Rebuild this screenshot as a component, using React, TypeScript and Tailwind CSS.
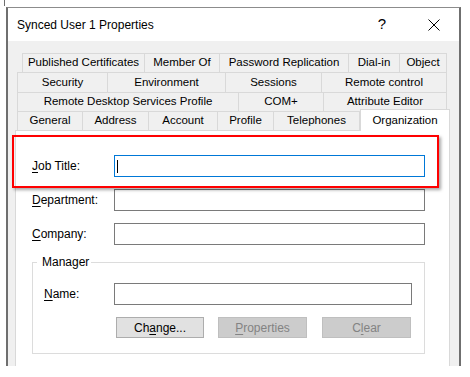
const font = { fontFamily: '"Liberation Sans", Arial, sans-serif' };

type TabDef = { label: string; w: number };

const row1: TabDef[] = [
  { label: "Published Certificates", w: 123 },
  { label: "Member Of", w: 75 },
  { label: "Password Replication", w: 129 },
  { label: "Dial-in", w: 51 },
  { label: "Object", w: 47 },
];
const row2: TabDef[] = [
  { label: "Security", w: 91 },
  { label: "Environment", w: 118 },
  { label: "Sessions", w: 96 },
  { label: "Remote control", w: 125 },
];
const row3: TabDef[] = [
  { label: "Remote Desktop Services Profile", w: 222 },
  { label: "COM+", w: 85 },
  { label: "Attribute Editor", w: 123 },
];
const row4: TabDef[] = [
  { label: "General", w: 66 },
  { label: "Address", w: 66 },
  { label: "Account", w: 69 },
  { label: "Profile", w: 56 },
  { label: "Telephones", w: 86 },
];

function TabRow({ tabs, className, bottom }: { tabs: TabDef[]; className: string; bottom?: boolean }) {
  return (
    <div className={`flex ${className}`}>
      {tabs.map((t, i) => (
        <div
          key={t.label}
          style={{ width: t.w }}
          className={`flex items-center justify-center border-t border-r border-[#d9d9d9] bg-[#f0f0f0] text-[11.5px] text-black whitespace-nowrap ${
            i === 0 ? "border-l" : ""
          } ${bottom ? "border-b" : ""}`}
        >
          {t.label}
        </div>
      ))}
    </div>
  );
}

function Field({ u, rest, focused }: { u: string; rest: string; focused?: boolean }) {
  return (
    <div className="flex items-center h-[22px]">
      <div className="w-[82px] text-[12px] text-black">
        <span className="underline underline-offset-2">{u}</span>
        {rest}
      </div>
      <div
        className={`w-[311px] h-[22px] bg-white border flex items-center pl-[2px] ${
          focused ? "border-[#0078d7]" : "border-[#7a7a7a]"
        }`}
      >
        {focused && <span className="w-px h-[13px] bg-black" />}
      </div>
    </div>
  );
}

function Btn({ children, disabled, w }: { children: React.ReactNode; disabled?: boolean; w: string }) {
  return (
    <div
      className={`${w} h-[21px] flex items-center justify-center border text-[12px] ${
        disabled ? "bg-[#cccccc] border-[#bfbfbf] text-[#838383]" : "bg-[#e1e1e1] border-[#adadad] text-black"
      }`}
    >
      {children}
    </div>
  );
}

export default function App() {
  return (
    <div style={font} className="relative w-[470px] h-[377px] bg-white overflow-hidden">
      <div className="h-[7px]">
        <div className="ml-[4px] w-px h-[6px] bg-[#6f6f6f]" />
      </div>

      <div className="ml-[6px] w-[455px] h-[359px] border-x-2 border-t border-x-[#6f6f6f] border-t-[#8c8c8c] flex flex-col">
        {/* title bar */}
        <div className="h-[33px] bg-white flex items-center pl-[9px] pr-[19px]">
          <span className="text-[12px] text-black">Synced User 1 Properties</span>
          <span className="ml-auto text-[15px] text-black">?</span>
          <svg className="ml-[42px]" width="12" height="12" viewBox="0 0 12 12">
            <path d="M0.5 0.5 L11.5 11.5 M11.5 0.5 L0.5 11.5" stroke="#000" strokeWidth="1" fill="none" />
          </svg>
        </div>

        {/* body */}
        <div className="flex-1 bg-[#f0f0f0] pt-[12px] pl-[7px]">
          <div className="w-[435px] flex flex-col">
            <TabRow tabs={row1} className="h-[19px] ml-[7px]" />
            <TabRow tabs={row2} className="h-[20px] ml-[2px]" />
            <TabRow tabs={row3} className="h-[19px] ml-[2px]" />
            <div className="flex h-[20px]">
              <div className="w-[2px] border-b border-[#d9d9d9]" />
              <TabRow tabs={row4} className="h-[20px]" bottom />
              <div className="relative z-10 -mt-[2px] w-[90px] h-[22px] bg-white border-t border-x border-[#d9d9d9] flex items-center justify-center text-[11.5px] text-black">
                Organization
              </div>
            </div>

            {/* tab page */}
            <div className="h-[235px] bg-white border-x border-[#d9d9d9]">
              <div className="pt-[24px] pl-[16px] flex flex-col gap-[12px]">
                <Field u="J" rest="ob Title:" focused />
                <Field u="D" rest="epartment:" />
                <Field u="C" rest="ompany:" />
              </div>

              <fieldset className="mt-[10px] ml-[16px] w-[393px] border border-[#dcdcdc] pb-[15px]">
                <legend className="ml-[4px] pl-[5px] pr-[2px] text-[12px] leading-[14px] text-black">Manager</legend>
                <div className="pl-[11px]">
                  <div className="mt-[14px] flex items-center h-[22px]">
                    <div className="w-[70px] text-[12px] text-black">
                      <span className="underline underline-offset-2">N</span>ame:
                    </div>
                    <div className="w-[298px] h-[22px] bg-white border border-[#7a7a7a]" />
                  </div>
                  <div className="mt-[12px] ml-[72px] flex gap-[14px]">
                    <Btn w="w-[88px]">
                      Ch<span className="underline underline-offset-2">a</span>nge...
                    </Btn>
                    <Btn w="w-[89px]" disabled>
                      <span className="underline underline-offset-2">P</span>roperties
                    </Btn>
                    <div className="ml-px">
                      <Btn w="w-[89px]" disabled>
                        C<span className="underline underline-offset-2">l</span>ear
                      </Btn>
                    </div>
                  </div>
                </div>
              </fieldset>
            </div>
          </div>
        </div>
      </div>

      {/* annotation highlight */}
      <div className="absolute left-[12px] top-[135px] w-[427px] h-[53px] border-2 border-[#ff0000] shadow-[2px_2px_3px_rgba(0,0,0,0.35)]" />
    </div>
  );
}
